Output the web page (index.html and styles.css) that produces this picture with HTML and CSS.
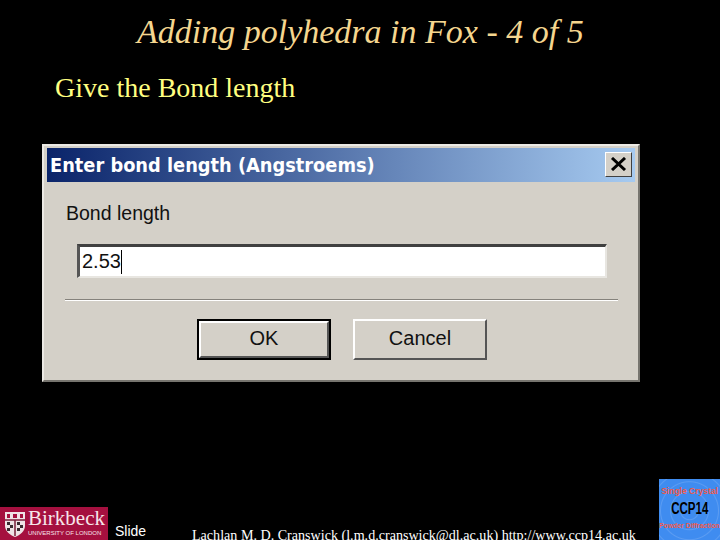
FILE: index.html
```html
<!DOCTYPE html>
<html lang="en">
<head>
  <meta charset="UTF-8">
  <title>Adding polyhedra in Fox - 4 of 5</title>
  <link rel="stylesheet" href="styles.css">
</head>
<body>
  <div class="slide">
    <h1>Adding polyhedra in Fox - 4 of 5</h1>
    <p class="lead">Give the Bond length</p>

    <div class="dialog">
      <div class="titlebar">
        <span>Enter bond length (Angstroems)</span>
        <div class="close">
          <svg width="17" height="14" viewBox="0 0 17 14"><path d="M2 1 L15 13 M15 1 L2 13" stroke="#000" stroke-width="3" fill="none"/></svg>
        </div>
      </div>
      <div class="dialog-body">
        <label>Bond length</label>
        <div class="field"><span>2.53</span><i class="caret"></i></div>
        <div class="rule"></div>
        <div class="buttons">
          <div class="btn default"><span>OK</span></div>
          <div class="btn"><span>Cancel</span></div>
        </div>
      </div>
    </div>

    <div class="footer">
      <div class="birkbeck">
        <svg class="shield" width="20" height="26" viewBox="0 0 20 26">
          <path d="M0 1 H20 V15 C20 20 15 24 10 26 C5 24 0 20 0 15 Z" fill="#efe3e6"/>
          <path d="M0 9 H20 M10 9 V25" stroke="#7a1f3a" stroke-width="1.5"/>
          <path d="M2 3 H18 V7 H2 Z" fill="#a5103f"/>
          <path d="M5 3 H8 V7 H5 Z M12 3 H15 V7 H12 Z" fill="#efe3e6"/>
          <path d="M2 11 H5 V14 H2 Z M5 14 H8 V17 H5 Z M2 17 H5 V20 H2 Z M12 11 H15 V14 H12 Z M15 14 H18 V17 H15 Z M12 17 H15 V20 H12 Z" fill="#3a2a30"/>
        </svg>
        <div class="birkbeck-text">
          <div class="bb-name">Birkbeck</div>
          <div class="bb-sub">UNIVERSITY OF LONDON</div>
        </div>
      </div>
      <div class="slide-no">Slide</div>
      <div class="credit">Lachlan M. D. Cranswick (l.m.d.cranswick@dl.ac.uk) http://www.ccp14.ac.uk</div>
      <div class="ccp14">
        <div class="ccp-red">Single Crystal</div>
        <div class="ccp-name">CCP14</div>
        <div class="ccp-red ccp-small">Powder Diffraction</div>
      </div>
    </div>
  </div>
</body>
</html>
```

FILE: styles.css
```css
html, body { margin: 0; padding: 0; background: #000; }
.slide { width: 720px; height: 540px; overflow: hidden; display: flex; flex-direction: column; font-family: "Liberation Serif", serif; }
h1 { margin: 13px 0 0 137px; font-size: 34px; line-height: 37px; font-weight: normal; font-style: italic; color: #f5d68f; white-space: nowrap; }
.lead { margin: 22px 0 0 55px; font-size: 28px; line-height: 32px; color: #ffff80; white-space: nowrap; }

.dialog { margin: 40px 0 0 42px; width: 598px; height: 238px; box-sizing: border-box; background: #d4d0c8; padding: 2px 3px 0; border-top: 2px solid #ebe9e4; border-left: 2px solid #ebe9e4; border-right: 2px solid #77756f; border-bottom: 2px solid #77756f; font-family: "Liberation Sans", sans-serif; color: #111; }
.titlebar { height: 34px; background: linear-gradient(to right, #0a246a, #a6caf0); display: flex; align-items: center; justify-content: space-between; padding: 0 3px 0 3px; }
.titlebar span { font-family: "DejaVu Sans", sans-serif; font-stretch: condensed; font-weight: bold; font-size: 19.8px; color: #fff; white-space: nowrap; }
.close { width: 27px; height: 25px; box-sizing: border-box; background: #d4d0c8; border: 1px solid; border-color: #fff #404040 #404040 #fff; display: flex; align-items: center; justify-content: center; margin-bottom: 2px; }
.dialog-body { padding: 19px 28px 0 19px; }
label { display: block; font-size: 19.5px; line-height: 24px; }
.field { margin: 19px 0 0 11px; height: 34px; box-sizing: border-box; background: #fff; border-top: 3px solid #404040; border-left: 3px solid #555; border-right: 2px solid #e8e6e1; border-bottom: 2px solid #e8e6e1; display: flex; align-items: center; font-size: 20px; padding-left: 2px; }
.caret { display: inline-block; width: 1px; height: 24px; background: #000; }
.rule { margin: 21px -11px 0 -1px; height: 1px; background: #85827c; border-bottom: 1px solid #fff; }
.buttons { display: flex; gap: 22px; margin: 18px 0 0 131px; }
.btn { width: 134px; height: 41px; box-sizing: border-box; background: #d4d0c8; border: 2px solid; border-color: #fff #555 #555 #fff; display: flex; align-items: center; justify-content: center; font-size: 20px; padding-bottom: 3px; }
.btn.default { outline: 2px solid #000; outline-offset: -2px; border-width: 4px; }

.footer { margin-top: auto; height: 61px; display: flex; align-items: flex-end; }
.birkbeck { width: 108px; height: 33px; background: #a5103f; display: flex; align-items: center; gap: 3px; padding-left: 5px; box-sizing: border-box; color: #f6e6ea; }
.bb-name { font-size: 21px; line-height: 18px; margin-top: -1px; white-space: nowrap; font-family: "Liberation Serif", serif; }
.bb-sub { font-size: 6px; line-height: 7px; margin-top: 3px; white-space: nowrap; font-family: "Liberation Sans", sans-serif; }
.slide-no { margin: 0 0 1px 7px; width: 77px; font-family: "Liberation Sans", sans-serif; font-size: 14px; line-height: 16px; color: #fff; }
.credit { width: 467px; height: 12px; font-size: 14.1px; line-height: 14px; color: #fff; white-space: nowrap; }
.ccp14 { width: 61px; height: 61px; box-sizing: border-box; padding-bottom: 2px; background: repeating-radial-gradient(circle at 50% 52%, #3f8cf0 0, #3f8cf0 8px, #5b9cf2 9px, #3f8cf0 10px); display: flex; flex-direction: column; align-items: center; justify-content: center; color: #000; font-family: "Liberation Sans", sans-serif; }
.ccp-red { font-size: 8.5px; line-height: 12px; color: #f05a4a; white-space: nowrap; font-weight: bold; }
.ccp-small { font-size: 6.8px; }
.ccp-name { font-size: 16px; line-height: 20px; font-weight: bold; margin: 2px 0 1px; transform: scaleX(.72); }
```
